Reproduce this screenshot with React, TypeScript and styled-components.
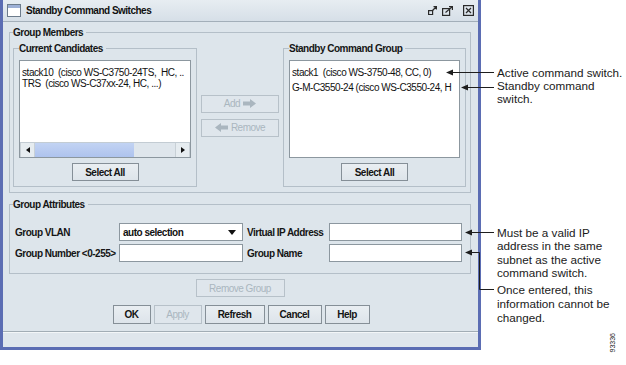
import React from 'react';
import styled, { createGlobalStyle } from 'styled-components';

const GlobalStyle = createGlobalStyle`
  html, body {
    margin: 0;
    padding: 0;
    background: #ffffff;
  }
  body {
    font-family: 'Liberation Sans', Arial, sans-serif;
    color: #141414;
  }
`;

const leftItems = [
    'stack10  (cisco WS-C3750-24TS,  HC, ..',
    'TRS  (cisco WS-C37xx-24, HC, ...)',
];

const rightItems = [
    'stack1  (cisco WS-3750-48, CC, 0)',
    'G-M-C3550-24 (cisco WS-C3550-24, H',
];

const footerButtons = [
    { label: 'OK', width: 38 },
    { label: 'Apply', width: 48, disabled: true },
    { label: 'Refresh', width: 60 },
    { label: 'Cancel', width: 54 },
    { label: 'Help', width: 45 },
];

//** Little arrow drawn next to the Add / Remove labels */
const MoveArrow = ({ dir }: { dir: 'left' | 'right' }) => (
    <svg width="13" height="9" viewBox="0 0 13 9">
        <path
            d={
                dir === 'right'
                    ? 'M0 2.5H7V0L13 4.5L7 9V6.5H0Z'
                    : 'M13 2.5H6V0L0 4.5L6 9V6.5H13Z'
            }
            fill="currentColor"
        />
    </svg>
);

const App = () => {
    return (
        <>
            <GlobalStyle />
            <Page>
                <Window>
                    <TitleBar>
                        <svg width="14" height="13" viewBox="0 0 14 13">
                            <rect x="0.5" y="0.5" width="13" height="12" fill="#ffffff" stroke="#6d7c8c" />
                            <rect x="1" y="1" width="12" height="3" fill="#9db0d6" />
                        </svg>
                        <Title>Standby Command Switches</Title>
                        <TitleTools>
                            <svg width="9" height="9" viewBox="0 0 9 9">
                                <g fill="none" stroke="#2a2a2a" strokeWidth="1.2">
                                    <rect x="0.6" y="4.6" width="4" height="4" />
                                    <path d="M4.5 4.5L8.5 0.5M5.5 0.6H8.4V3.5" />
                                </g>
                            </svg>
                            <svg width="11" height="10" viewBox="0 0 11 10">
                                <g fill="none" stroke="#2a2a2a" strokeWidth="1.2">
                                    <rect x="0.6" y="2.6" width="7" height="6.8" />
                                    <path d="M3.5 6.5L10.4 0.6M7 0.6H10.4V4" />
                                </g>
                            </svg>
                            <CloseGap />
                            <svg width="11" height="11" viewBox="0 0 11 11">
                                <g fill="none" stroke="#2a2a2a" strokeWidth="1.2">
                                    <rect x="0.6" y="0.6" width="9.8" height="9.8" />
                                    <path d="M3 3L8 8M8 3L3 8" />
                                </g>
                            </svg>
                        </TitleTools>
                    </TitleBar>

                    <Content>
                        <Group $pad="3px 4px 5px 3px" $mt={4}>
                            <Legend>Group Members</Legend>
                            <MembersRow>
                                <Group $pad="5px 5px 5px 5px" $w={184}>
                                    <Legend>Current Candidates</Legend>
                                    <ListBox>
                                        <ListLines $lh={11} $pt={6}>
                                            {leftItems.map((item) => (
                                                <ListLine key={item}>{item}</ListLine>
                                            ))}
                                        </ListLines>
                                        <ScrollBar>
                                            <ScrollButton>
                                                <svg width="4" height="6" viewBox="0 0 4 6">
                                                    <path d="M4 0V6L0 3Z" fill="#111" />
                                                </svg>
                                            </ScrollButton>
                                            <ScrollThumb />
                                            <ScrollTrack />
                                            <ScrollButton>
                                                <svg width="4" height="6" viewBox="0 0 4 6">
                                                    <path d="M0 0V6L4 3Z" fill="#111" />
                                                </svg>
                                            </ScrollButton>
                                        </ScrollBar>
                                    </ListBox>
                                    <CenterRow $mt={5}>
                                        <Button $w={67}>Select All</Button>
                                    </CenterRow>
                                </Group>

                                <MoveColumn>
                                    <Button $w={78} disabled>
                                        Add <MoveArrow dir="right" />
                                    </Button>
                                    <Button $w={78} disabled>
                                        <MoveArrow dir="left" /> Remove
                                    </Button>
                                </MoveColumn>

                                <Group $pad="5px 5px 5px 5px" $w={183}>
                                    <Legend>Standby Command Group</Legend>
                                    <ListBox>
                                        <ListLines $lh={15} $pt={4}>
                                            {rightItems.map((item) => (
                                                <ListLine key={item}>{item}</ListLine>
                                            ))}
                                        </ListLines>
                                    </ListBox>
                                    <CenterRow $mt={5}>
                                        <Button $w={67}>Select All</Button>
                                    </CenterRow>
                                </Group>
                            </MembersRow>
                        </Group>

                        <Group $pad="12px 4px 11px 3px" $mt={5}>
                            <Legend>Group Attributes</Legend>
                            <AttrGrid>
                                <FieldLabel>Group VLAN</FieldLabel>
                                <Combo>
                                    <span>auto selection</span>
                                    <svg width="8" height="5" viewBox="0 0 8 5">
                                        <path d="M0 0H8L4 5Z" fill="#111" />
                                    </svg>
                                </Combo>
                                <FieldLabel>Virtual IP Address</FieldLabel>
                                <TextField />
                                <FieldLabel>Group Number &lt;0-255&gt;</FieldLabel>
                                <TextField />
                                <FieldLabel>Group Name</FieldLabel>
                                <TextField />
                            </AttrGrid>
                        </Group>

                        <CenterRow $mt={5}>
                            <Button $w={89} disabled>
                                Remove Group
                            </Button>
                        </CenterRow>

                        <FooterRow>
                            {footerButtons.map((b) => (
                                <Button key={b.label} $w={b.width} $h={19} disabled={b.disabled}>
                                    {b.label}
                                </Button>
                            ))}
                        </FooterRow>
                    </Content>

                    <StatusStrip />
                </Window>

                <Callouts width="626" height="365" viewBox="0 0 626 365">
                    <g stroke="#1e1e1e" strokeWidth="1" fill="none">
                        <path d="M453 72.5H494" />
                        <path d="M468 87.5H494" />
                        <path d="M472 232.5H494" />
                        <path d="M472 252.5H479.5V289.5H494" />
                    </g>
                    <g fill="#1e1e1e">
                        <path d="M446 72.5L453 69.5V75.5Z" />
                        <path d="M461 87.5L468 84.5V90.5Z" />
                        <path d="M465 232.5L472 229.5V235.5Z" />
                        <path d="M465 252.5L472 249.5V255.5Z" />
                    </g>
                </Callouts>

                <Note $top={66} $lh={13}>Active command switch.</Note>
                <Note $top={80} $lh={12.5}>
                    Standby command
                    <br />
                    switch.
                </Note>
                <Note $top={226} $lh={13.4}>
                    Must be a valid IP
                    <br />
                    address in the same
                    <br />
                    subnet as the active
                    <br />
                    command switch.
                </Note>
                <Note $top={283} $lh={14}>
                    Once entered, this
                    <br />
                    information cannot be
                    <br />
                    changed.
                </Note>
                <FigureNumber>93336</FigureNumber>
            </Page>
        </>
    );
};

export default App;

const Page = styled.div`
    position: relative;
    width: 626px;
    height: 365px;
    overflow: hidden;
    background: #ffffff;
`;

const Window = styled.div`
    width: 481px;
    box-sizing: border-box;
    border-left: 3px solid #5b6db3;
    border-right: 3px solid #5b6db3;
    border-bottom: 3px solid #5b6db3;
    background: #dde5eb;
    display: flex;
    flex-direction: column;
`;

const TitleBar = styled.div`
    height: 22px;
    box-sizing: border-box;
    display: flex;
    align-items: center;
    padding: 0 4px 0 4px;
    background: linear-gradient(#e7edf2, #d6dfe7);
    border-bottom: 1px solid #a3afb9;
`;

const Title = styled.span`
    margin-left: 5px;
    font-size: 10px;
    font-weight: bold;
    letter-spacing: -0.5px;
    color: #111;
`;

const TitleTools = styled.div`
    margin-left: auto;
    display: flex;
    align-items: center;
    gap: 5px;
`;

const CloseGap = styled.span`
    width: 0px;
`;

const Content = styled.div`
    display: flex;
    flex-direction: column;
    padding: 0 7px 0 6px;
`;

const Group = styled.fieldset<{ $pad: string; $w?: number; $mt?: number }>`
    margin: ${(p) => p.$mt || 0}px 0 0 0;
    min-width: 0;
    padding: ${(p) => p.$pad};
    box-sizing: border-box;
    border: 1px solid #b4bfc8;
    ${(p) => (p.$w ? `width: ${p.$w}px; flex: none;` : '')}
`;

const Legend = styled.legend`
    padding: 0 3px 0 0;
    font-size: 10px;
    line-height: 13px;
    font-weight: bold;
    letter-spacing: -0.5px;
    color: #151515;
`;

const MembersRow = styled.div`
    display: flex;
    gap: 4px;
`;

const MoveColumn = styled.div`
    display: flex;
    flex-direction: column;
    justify-content: center;
    gap: 6px;
    width: 78px;
    flex: none;
    padding-top: 2px;
`;

const ListBox = styled.div`
    height: 98px;
    box-sizing: border-box;
    border: 1px solid #8c979f;
    background: #ffffff;
    display: flex;
    flex-direction: column;
    overflow: hidden;
`;

const ListLines = styled.div<{ $lh: number; $pt: number }>`
    flex: 1;
    padding: ${(p) => p.$pt}px 0 0 2px;
    line-height: ${(p) => p.$lh}px;
    font-size: 10px;
    letter-spacing: -0.45px;
    color: #111;
    overflow: hidden;
`;

const ListLine = styled.div`
    white-space: pre;
`;

const ScrollBar = styled.div`
    height: 14px;
    display: flex;
    border-top: 1px solid #c3ccd3;
    background: #e3e9ee;
`;

const ScrollButton = styled.div`
    width: 13px;
    display: flex;
    align-items: center;
    justify-content: center;
    background: #e6ecf0;
    border-left: 1px solid #c8d0d6;
    border-right: 1px solid #c8d0d6;
`;

const ScrollThumb = styled.div`
    width: 99px;
    background: linear-gradient(#c2d3f3, #aec3ee);
`;

const ScrollTrack = styled.div`
    flex: 1;
    background: #dfe6ec;
`;

const CenterRow = styled.div<{ $mt: number }>`
    display: flex;
    justify-content: center;
    margin-top: ${(p) => p.$mt}px;
`;

const Button = styled.button<{ $w: number; $h?: number }>`
    width: ${(p) => p.$w}px;
    height: ${(p) => p.$h || 18}px;
    box-sizing: border-box;
    padding: 0;
    display: flex;
    align-items: center;
    justify-content: center;
    gap: 3px;
    border: 1px solid #858f97;
    background: linear-gradient(#e9eef2, #dde4ea);
    font-family: 'Liberation Sans', Arial, sans-serif;
    font-size: 10px;
    font-weight: bold;
    letter-spacing: -0.5px;
    color: #141414;

    &:disabled {
        border-color: #b7c1c9;
        background: #dfe6ec;
        color: #aab6bf;
        font-weight: normal;
    }
`;

const AttrGrid = styled.div`
    display: grid;
    grid-template-columns: 100px 124px 78px 133px;
    grid-auto-rows: 18px;
    column-gap: 4px;
    row-gap: 3px;
    margin-left: 2px;
    align-items: stretch;
`;

const FieldLabel = styled.span`
    display: flex;
    align-items: center;
    font-size: 10px;
    font-weight: bold;
    letter-spacing: -0.5px;
    white-space: nowrap;
    color: #151515;
`;

const Combo = styled.div`
    box-sizing: border-box;
    border: 1px solid #8c979f;
    background: #ffffff;
    display: flex;
    align-items: center;
    justify-content: space-between;
    padding: 0 6px 0 3px;
    font-size: 10px;
    font-weight: bold;
    letter-spacing: -0.5px;
    color: #111;
`;

const TextField = styled.div`
    box-sizing: border-box;
    border: 1px solid #8c979f;
    background: #ffffff;
`;

const FooterRow = styled.div`
    display: flex;
    justify-content: center;
    gap: 3px;
    margin-top: 8px;
    padding-left: 2px;
`;

const StatusStrip = styled.div`
    margin-top: 7px;
    height: 15px;
    border-top: 1px solid #a2adb5;
    box-shadow: inset 0 1px 0 #f3f6f8;
    background: #dfe6ec;
`;

const Callouts = styled.svg`
    position: absolute;
    left: 0;
    top: 0;
    pointer-events: none;
`;

const Note = styled.div<{ $top: number; $lh: number }>`
    position: absolute;
    left: 497px;
    top: ${(p) => p.$top}px;
    font-size: 11.7px;
    line-height: ${(p) => p.$lh}px;
    white-space: nowrap;
    color: #1a1a1a;
`;

const FigureNumber = styled.div`
    position: absolute;
    left: 609px;
    top: 333px;
    writing-mode: vertical-rl;
    transform: rotate(180deg);
    font-size: 7px;
    color: #222;
`;
